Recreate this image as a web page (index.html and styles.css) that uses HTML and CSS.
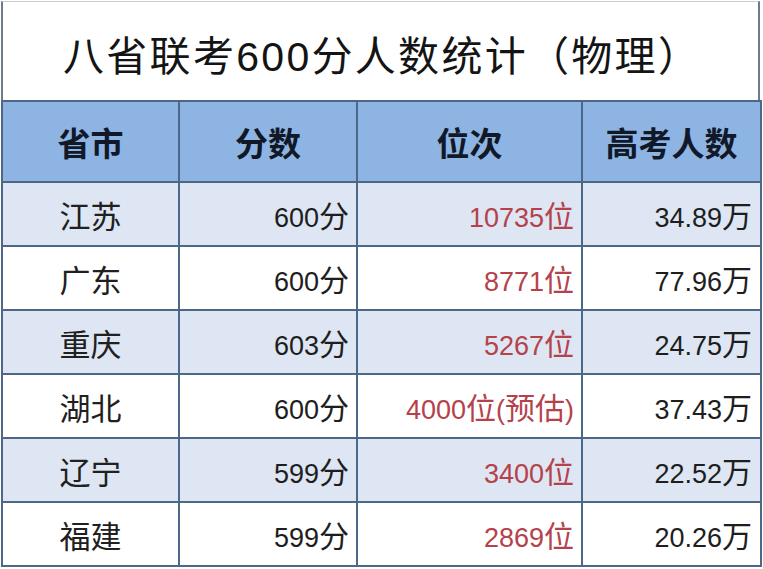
FILE: index.html
```html
<!DOCTYPE html>
<html lang="zh-CN">
<head>
<meta charset="utf-8">
<title>八省联考600分人数统计（物理）</title>
<link rel="stylesheet" href="styles.css">
</head>
<body>
<div class="sheet">
  <div class="title">八省联考600分人数统计（物理）</div>
  <table class="grid">
    <colgroup>
      <col class="c1"><col class="c2"><col class="c3"><col class="c4">
    </colgroup>
    <thead>
      <tr><th>省市</th><th>分数</th><th>位次</th><th>高考人数</th></tr>
    </thead>
    <tbody>
      <tr class="alt"><td class="prov">江苏</td><td class="num">600<span class="u">分</span></td><td class="num red">10735<span class="u">位</span></td><td class="num">34.89<span class="u">万</span></td></tr>
      <tr><td class="prov">广东</td><td class="num">600<span class="u">分</span></td><td class="num red">8771<span class="u">位</span></td><td class="num">77.96<span class="u">万</span></td></tr>
      <tr class="alt"><td class="prov">重庆</td><td class="num">603<span class="u">分</span></td><td class="num red">5267<span class="u">位</span></td><td class="num">24.75<span class="u">万</span></td></tr>
      <tr><td class="prov">湖北</td><td class="num">600<span class="u">分</span></td><td class="num red">4000<span class="u">位</span>(<span class="u">预估</span>)</td><td class="num">37.43<span class="u">万</span></td></tr>
      <tr class="alt"><td class="prov">辽宁</td><td class="num">599<span class="u">分</span></td><td class="num red">3400<span class="u">位</span></td><td class="num">22.52<span class="u">万</span></td></tr>
      <tr><td class="prov">福建</td><td class="num">599<span class="u">分</span></td><td class="num red">2869<span class="u">位</span></td><td class="num">20.26<span class="u">万</span></td></tr>
    </tbody>
  </table>
</div>
</body>
</html>
```

FILE: styles.css
```css
html, body {
  margin: 0;
  padding: 0;
  background: #ffffff;
}

body {
  font-family: "Liberation Sans", "Noto Sans CJK SC", sans-serif;
  color: #1e1e1e;
}

.sheet {
  width: 759px;
  margin: 1px 0 0 1px;
}

.title {
  height: 99px;
  box-sizing: border-box;
  border-top: 1px solid #c9cfd6;
  border-left: 2px solid #6f7b8a;
  border-right: 2px solid #6f7b8a;
  padding: 3px 0 0 60px;
  display: flex;
  align-items: center;
  font-size: 41px;
  letter-spacing: 2.3px;
  color: #141414;
}

.grid {
  width: 759px;
  table-layout: fixed;
  border-collapse: collapse;
}

.c1 { width: 177px; }
.c2 { width: 178px; }
.c3 { width: 225px; }
.c4 { width: 179px; }

.grid th,
.grid td {
  border: 2px solid #4d6788;
  padding: 0;
}

.grid th {
  height: 79px;
  background: #8db4e3;
  font-family: "Noto Sans CJK SC", sans-serif;
  font-weight: 700;
  font-size: 33px;
  color: #111827;
  text-align: center;
}

.grid td {
  height: 62px;
  font-size: 27px;
  background: #ffffff;
}

.grid tr.alt td {
  background: #dde6f2;
}

.prov {
  text-align: center;
  font-family: "Noto Sans CJK SC", sans-serif;
  font-size: 31px !important;
  color: #202020;
}

.num {
  text-align: right;
  padding-right: 7px !important;
  white-space: nowrap;
}

.grid td.num:last-child {
  padding-right: 8px !important;
}

.u {
  font-family: "Noto Sans CJK SC", sans-serif;
  font-size: 30px;
}

.red {
  color: #b5424b;
}
```
